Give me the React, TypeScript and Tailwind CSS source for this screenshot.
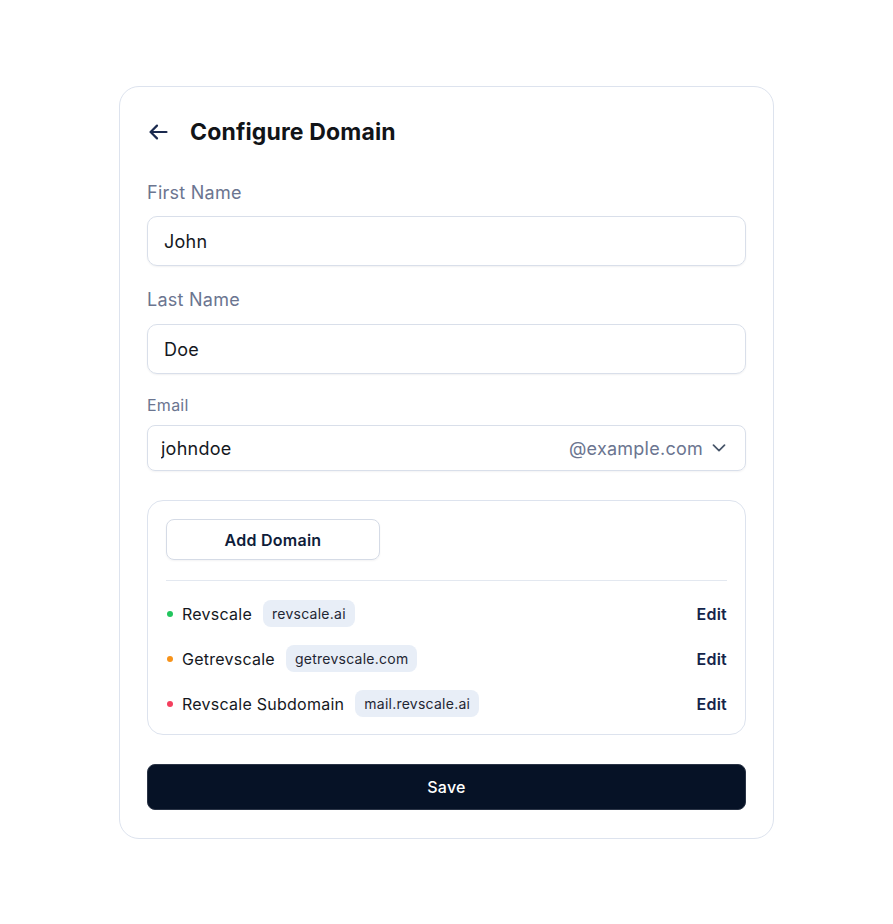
import { useState } from "react";

const DOMAINS = [
  { name: "Revscale", domain: "revscale.ai", dot: "bg-[#22c55e]" },
  { name: "Getrevscale", domain: "getrevscale.com", dot: "bg-[#f7931a]" },
  { name: "Revscale Subdomain", domain: "mail.revscale.ai", dot: "bg-[#f43f5e]" },
];

function BackArrow() {
  return (
    <svg width="19" height="16" viewBox="0 0 19 16" fill="none" stroke="#1b2a4e" strokeWidth="2.2" strokeLinecap="round" strokeLinejoin="round">
      <path d="M17.5 8H1.8" />
      <path d="M8 1.6 1.6 8 8 14.4" />
    </svg>
  );
}

function Chevron() {
  return (
    <svg width="14" height="8" viewBox="0 0 14 8" fill="none" stroke="#475569" strokeWidth="1.7" strokeLinecap="round" strokeLinejoin="round">
      <path d="M1.5 1.2 7 6.6l5.5-5.4" />
    </svg>
  );
}

export default function App() {
  const [first, setFirst] = useState("John");
  const [last, setLast] = useState("Doe");
  const [email, setEmail] = useState("johndoe");

  return (
    <div className="min-h-screen bg-white font-['Inter',sans-serif] tracking-[0.25px] pt-[86px] pl-[119px]">
      <div className="w-[655px] rounded-[20px] border border-[#dde3ee] bg-white px-[27px] pt-[27px] pb-[28px]">
        <div className="flex h-[36px] items-center">
          <button className="ml-[2px] flex items-center" aria-label="Back">
            <BackArrow />
          </button>
          <h1 className="ml-[22px] text-[23px] font-bold tracking-[0.15px] text-[#111418]">Configure Domain</h1>
        </div>

        <label className="mt-[29px] block text-[18px] leading-[28px] text-[#6b7590]">First Name</label>
        <input
          value={first}
          onChange={(e) => setFirst(e.target.value)}
          className="mt-[9px] h-[50px] w-full rounded-[10px] border border-[#d9dfea] px-4 text-[18px] text-[#15181e] shadow-[0_1px_2px_rgba(16,24,40,0.06)] outline-none"
        />

        <label className="mt-5 block text-[18px] leading-[28px] text-[#6b7590]">Last Name</label>
        <input
          value={last}
          onChange={(e) => setLast(e.target.value)}
          className="mt-[10px] h-[50px] w-full rounded-[10px] border border-[#d9dfea] px-4 text-[18px] text-[#15181e] shadow-[0_1px_2px_rgba(16,24,40,0.06)] outline-none"
        />

        <label className="mt-[19px] block text-[16px] leading-[24px] text-[#6b7590]">Email</label>
        <div className="mt-2 flex h-[46px] items-center rounded-[8px] border border-[#d9dfea] pl-[13px] pr-[19px] shadow-[0_1px_2px_rgba(16,24,40,0.05)]">
          <input
            value={email}
            onChange={(e) => setEmail(e.target.value)}
            className="min-w-0 flex-1 text-[18px] text-[#15181e] outline-none"
          />
          <span className="text-[18px] text-[#6b7590]">@example.com</span>
          <span className="ml-[9px] flex items-center">
            <Chevron />
          </span>
        </div>

        <div className="mt-[29px] rounded-[16px] border border-[#dde3ee] px-[18px] pt-[18px] pb-2">
          <button className="h-[41px] w-[214px] rounded-[8px] border border-[#d5dbe6] text-[16px] font-semibold text-[#0f1d3a] shadow-[0_1px_2px_rgba(16,24,40,0.05)]">
            Add Domain
          </button>
          <div className="mt-5 h-px bg-[#e3e8f0]" />
          <div className="pt-[10px]">
            {DOMAINS.map((d) => (
              <div key={d.domain} className="flex h-[45px] items-center">
                <span className={`ml-[1px] h-[6px] w-[6px] rounded-full ${d.dot}`} />
                <span className="ml-[9px] text-[16px] text-[#15181e]">{d.name}</span>
                <span className="ml-[11px] rounded-[8px] bg-[#e8eef7] px-[9px] py-[3px] text-[14px] text-[#1f2633]">{d.domain}</span>
                <button className="ml-auto text-[16px] font-semibold text-[#14244a]">Edit</button>
              </div>
            ))}
          </div>
        </div>

        <button className="mt-[29px] h-[46px] w-full rounded-[8px] border border-[#2a3446] bg-[#061226] text-[16px] font-medium text-white">
          Save
        </button>
      </div>
    </div>
  );
}
